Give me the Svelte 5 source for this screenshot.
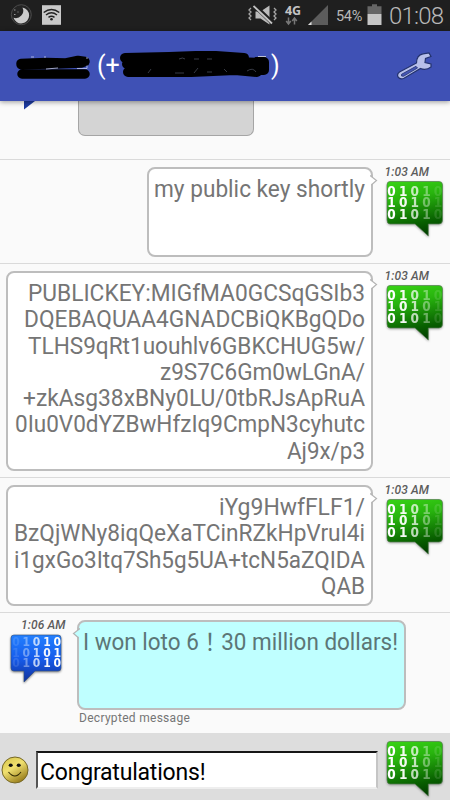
<script>
    const sent = [
        { time: '1:03 AM', height: 104, lines: [['my public key shortly', 211]] },
        {
            time: '1:03 AM',
            height: 214,
            lines: [
                ['PUBLICKEY:MIGfMA0GCSqGSIb3', 337],
                ['DQEBAQUAA4GNADCBiQKBgQDo', 341],
                ['TLHS9qRt1uouhlv6GBKCHUG5w/', 337],
                ['z9S7C6Gm0wLGnA/', 205],
                ['+zkAsg38xBNy0LU/0tbRJsApRuA', 342],
                ['0Iu0V0dYZBwHfzIq9CmpN3cyhutc', 350],
                ['Aj9x/p3', 78],
            ],
        },
        {
            time: '1:03 AM',
            height: 135,
            lines: [
                ['iYg9HwfFLF1/', 146],
                ['BzQjWNy8iqQeXaTCinRZkHpVruI4i', 351],
                ['i1gxGo3Itq7Sh5g5UA+tcN5aZQIDA', 351],
                ['QAB', 44],
            ],
        },
    ];

    const bits = ['01010', '10101', '01010'];
    const fade = [1, 0.95, 0.72, 0.38, 0.12];
    let draft = 'Congratulations!';
</script>

{#snippet line(text, width)}
    <svg class="line" {width} height="26.25" style="width: {width}px">
        <text x="0" y="21.3" textLength={width} lengthAdjust="spacingAndGlyphs">{text}</text>
    </svg>
{/snippet}

{#snippet greenBits()}
    <svg class="green" width="60" height="60" viewBox="0 0 60 60">
        <path d="M5 1.5H54Q57.500 1.500 57.500 5V40Q57.500 44 54 44H43.300V56L30 44H5Q2 44 2 40V5Q2 1.500 5 1.500Z" fill="url(#green)" stroke="#557d50" stroke-width=".7" />
        <text>
            {#each bits as row, r}
                {#each row as bit, c}
                    <tspan x={6.6 + c * 11.6} y={15.6 + r * 11.8} fill-opacity={fade[c]}>{bit}</tspan>
                {/each}
            {/each}
        </text>
    </svg>
{/snippet}

<!-- gradients shared by the icons -->
<svg class="defs" width="0" height="0">
    <defs>
        <linearGradient id="green" x1=".3" y1="0" x2=".5" y2="1">
            <stop offset="0" stop-color="#36cf14" />
            <stop offset=".3" stop-color="#28b40e" />
            <stop offset=".78" stop-color="#086000" />
            <stop offset="1" stop-color="#023f00" />
        </linearGradient>
        <linearGradient id="blue" x1="0" y1="0" x2="0" y2="1">
            <stop offset="0" stop-color="#2380ff" />
            <stop offset=".5" stop-color="#165ceb" />
            <stop offset="1" stop-color="#12329c" />
        </linearGradient>
        <linearGradient id="smile" x1=".2" y1="0" x2=".8" y2="1">
            <stop offset="0" stop-color="#d9c84e" />
            <stop offset=".4" stop-color="#f0e070" />
            <stop offset="1" stop-color="#8d7010" />
        </linearGradient>
    </defs>
</svg>

<div class="phone">
    <div class="status">
        <svg width="66" height="31" viewBox="0 0 66 31">
            <circle cx="21.300" cy="14.700" r="10" fill="#242424" stroke="#4c4c4c" />
            <path d="M22.500 7.500A8 8 0 1 1 13.500 17.800A7.500 7.500 0 0 0 22.500 7.500Z" fill="#ccc" />
            <path d="M14 10h1.500M14 14.500h1.500M17.500 12h1" stroke="#999" />
            <path d="M42 5.200H61V24.800H42Z" fill="#c9c9c9" />
            <path d="M43.700 12.500Q51.500 6.500 59.300 12.500M46 15Q51.500 10.700 57 15M48.500 17.400Q51.500 15.300 54.500 17.400" fill="none" stroke="#222" stroke-width="1.500" />
            <circle cx="51.500" cy="19.200" r="1.300" fill="#222" />
        </svg>
        <div class="status-right">
            <svg width="88" height="31" viewBox="0 0 88 31">
                <path d="M7.500 11.500h5l9-6v19l-9-6h-5Z" fill="#bbb" />
                <path d="M6 5L24.500 23" stroke="#1f1f1f" stroke-width="4.500" />
                <path d="M5.500 6L24 23.500" stroke="#c4c4c4" stroke-width="1.800" />
                <path d="M3 8l-2 2 2 2-2 2 2 2-2 2 2 2M26 8l2 2-2 2 2 2-2 2 2 2-2 2" fill="none" stroke="#a5a5a5" stroke-width="1.300" />
                <text class="net" x="37" y="14.5" textLength="16">4G</text>
                <path d="M40.500 17.500v6m-2.300-2.500l2.300 3 2.300-3M46.500 24.500v-6m-2.300 2.500l2.300-3 2.300 3" fill="none" stroke="#777" stroke-width="1.500" />
                <path d="M60 25L80 5V25Z" fill="#5c5c5c" />
                <path d="M60 25L63.500 21.500V25Z" fill="#ddd" />
            </svg>
            <span class="percent">54%</span>
            <svg width="15" height="31" viewBox="0 0 15 31">
                <path d="M5 4.200h5v2h4.500V14H.5V6.200H5Z" fill="#666" />
                <path d="M.5 14h14v11H.5Z" fill="#c6c6c6" />
            </svg>
            <span class="clock">01:08</span>
        </div>
    </div>

    <header>
        <svg width="76" height="30" viewBox="0 0 76 30">
            <path d="M5 12.500L30 11.500L50 12L62 9.500L69 10.500L65 12L40 13L5 13.500M6 23H69" fill="none" stroke="#000" stroke-width="9.500" stroke-linecap="round" stroke-linejoin="round" />
            <path d="M15 6h3M28 6h2M70 7h2M61 17.500h10v-3M30 18l12-1" fill="none" stroke="#c5cbf0" stroke-width=".8" />
        </svg>
        <span class="paren open">(+</span>
        <svg width="153" height="30" viewBox="0 0 153 30">
            <path d="M6 7L50 6L90 4.500L125 7L125 9M8 13H125L144 14M9 21H72L116 19L138 21M90 10L145 12V18M138 11h7v8h-7" fill="none" stroke="#000" stroke-width="10" stroke-linecap="round" stroke-linejoin="round" />
            <path d="M60 8q4-2 6 0M75 8h5M88 8h5M32 18l-3 4M56 22h9M79 17l-4 5M88 21h5M105 18l3 3M128 20q6-4 9 1" fill="none" stroke="#454956" stroke-width=".8" />
            <path d="M139 5.500h8" stroke="#ddd" stroke-width=".8" />
        </svg>
        <span class="paren">)</span>
        <svg class="wrench" width="38" height="30" viewBox="0 0 38 30">
            <path d="M3.500 21L20.500 12C20.500 6.500 23 3.500 27 2.800L33 2L35 5.500L29.500 7.500L29 11.500L35 13V16C31 19 27 18.500 24.500 17.500L8 27.300C2.500 29.500 -.5 24 3.500 21Z" fill="#b8c0ea" stroke="#24336f" stroke-width="1.200" />
            <path d="M5.500 23.300L20 15.300L21.500 17L7.500 25.300Q4.500 25.500 5.500 23.300Z" fill="#4555b5" stroke="#24336f" stroke-width=".8" />
        </svg>
    </header>

    <main>
        <div class="row first">
            <svg class="tail" width="12" height="9" viewBox="0 0 12 9"><path d="M0 0H11L0 8.500Z" fill="#1c3aa0" /></svg>
            <div class="old"></div>
        </div>

        {#each sent as message}
            <div class="row sent" style="height: {message.height}px">
                <div class="bubble" class:full={message.lines.length > 1}>
                    {#each message.lines as [text, width]}
                        {@render line(text, width)}
                    {/each}
                    <svg class="beak" width="8" height="13" viewBox="0 0 8 13"><path d="M0 1.500L6.500 6.500L1.300 11" /></svg>
                </div>
                <div class="side">
                    <time>{message.time}</time>
                    {@render greenBits()}
                </div>
            </div>
        {/each}

        <div class="row received">
            <div class="side">
                <time>1:06 AM</time>
                <svg class="blue" width="56" height="52" viewBox="0 0 56 52">
                    <path d="M6 2H50Q53 2 53 5V35Q53 38 50 38H27L16 49V38H6Q3 38 3 35V5Q3 2 6 2Z" fill="url(#blue)" stroke="#305080" stroke-width=".6" />
                    <text>
                        {#each bits as row, r}
                            {#each row as bit, c}
                                <tspan x={8 + c * 10.3} y={13 + r * 10.7} fill-opacity={fade[4 - c]}>{bit}</tspan>
                            {/each}
                        {/each}
                    </text>
                </svg>
            </div>
            <div class="content">
                <div class="bubble aqua">
                    {@render line('I won loto 6！30 million dollars!', 315)}
                    <svg class="beak" width="8" height="13" viewBox="0 0 8 13"><path d="M0 1.500L6.500 6.500L1.300 11" /></svg>
                </div>
                <p>Decrypted message</p>
            </div>
        </div>
    </main>

    <footer>
        <svg width="28" height="28" viewBox="0 0 28 28">
            <circle cx="14" cy="14" r="13" fill="url(#smile)" stroke="#766826" />
            <ellipse cx="9.700" cy="9.200" rx="2" ry="1.800" fill="#111" />
            <ellipse cx="17.700" cy="9.200" rx="2" ry="1.800" fill="#111" />
            <path d="M7.500 16Q14 24 20 16" fill="none" stroke="#302800" stroke-width="1.100" />
        </svg>
        <input bind:value={draft} />
        {@render greenBits()}
    </footer>
</div>

<style>
    :global(body) {
        margin: 0;
        background: #fafafa;
        overflow: hidden;
    }

    .phone {
        width: 450px;
        height: 800px;
        display: flex;
        flex-direction: column;
        overflow: hidden;
        font-family: Roboto, "Noto Sans CJK JP", sans-serif;
        background: #fafafa;
    }

    svg {
        display: block;
        flex: none;
    }

    .defs {
        position: absolute;
    }

    .status {
        height: 31px;
        flex: none;
        display: flex;
        justify-content: space-between;
        background: #1f1f1f;
        color: #b8b8b8;
    }

    .status-right {
        display: flex;
        align-items: center;
        padding-right: 6px;
    }

    .net {
        font: bold 12.5px "Open Sans", sans-serif;
        fill: #c4c4c4;
    }

    .percent {
        width: 31px;
        font-size: 14.5px;
        letter-spacing: -0.3px;
        margin-top: 1px;
    }

    .clock {
        width: 55px;
        margin-left: 7px;
        font-size: 24px;
        font-weight: 300;
        letter-spacing: -0.8px;
    }

    header {
        height: 70px;
        flex: none;
        display: flex;
        align-items: center;
        box-sizing: border-box;
        padding: 0 16px 1px 16px;
        background: #3f51b5;
        box-shadow: 0 1px 5px rgba(0, 0, 0, 0.4);
        z-index: 1;
        color: #fff;
        font-size: 25px;
    }

    .paren {
        width: 8px;
        margin-left: -1px;
    }

    .open {
        width: 22px;
        margin: 0 0 0 5px;
    }

    .wrench {
        margin-left: auto;
    }

    main {
        height: 632px;
        flex: none;
    }

    .row {
        display: flex;
        box-sizing: border-box;
        border-bottom: 1px solid #dadada;
    }

    .first {
        height: 59px;
        padding-left: 24px;
    }

    .old {
        width: 174px;
        height: 34px;
        margin-left: 41.5px;
        border: 1px solid #a5a5a5;
        border-top: none;
        border-radius: 0 0 7px 7px;
        background: #d4d4d4;
    }

    .sent {
        justify-content: flex-end;
        padding: 7px 0 6px 6px;
    }

    .bubble {
        position: relative;
        display: flex;
        flex-direction: column;
        align-items: flex-end;
        box-sizing: border-box;
        padding: 7px 6px 0 5px;
        border: 2px solid #bdbdbd;
        border-radius: 8px;
        background: #fff;
    }

    .bubble.full {
        width: 367px;
    }

    .line {
        overflow: visible;
        font-size: 23px;
        fill: #757575;
    }

    .beak {
        position: absolute;
        top: 5px;
        right: -7px;
        fill: #fff;
        stroke: #b4b4b4;
        stroke-width: 1.2;
    }

    .side {
        width: 77px;
        flex: none;
    }

    time {
        display: block;
        height: 14px;
        margin: -1px 0 0 11.5px;
        font-size: 12px;
        line-height: 13px;
        font-weight: 500;
        font-style: italic;
        color: #5c5c5c;
        letter-spacing: 0.1px;
        white-space: nowrap;
    }

    .green,
    .blue {
        font: bold 13.5px "DejaVu Sans Condensed", "DejaVu Sans", sans-serif;
        font-stretch: condensed;
        fill: #fff;
        text-anchor: middle;
    }

    .green {
        margin-left: 11.5px;
        filter: drop-shadow(0 1px 1px rgba(0, 0, 0, 0.3));
    }

    .blue {
        margin-left: 8px;
        font-size: 12px;
        filter: drop-shadow(0 1px 1px rgba(0, 0, 0, 0.5));
    }

    .received {
        height: 120px;
        padding-top: 7px;
        border: none;
    }

    .received time {
        margin-left: 21px;
    }

    .aqua {
        width: 329px;
        height: 90px;
        background: #bfffff;
    }

    .aqua .line {
        fill: #5c7676;
    }

    .aqua .beak {
        right: auto;
        left: -7px;
        transform: scaleX(-1);
        fill: #bfffff;
    }

    p {
        margin: 1px 0 0 2px;
        font-size: 12px;
        line-height: 14px;
        color: #757575;
        letter-spacing: 0.3px;
    }

    footer {
        height: 67px;
        flex: none;
        display: flex;
        align-items: flex-start;
        background: #ddd;
    }

    footer > svg:first-child {
        margin: 23px 0 0 1px;
    }

    input {
        width: 342px;
        height: 38px;
        box-sizing: border-box;
        margin: 18px 0 0 7px;
        padding: 4px 2px 0;
        border: 2px solid;
        border-color: #161616 #c5c5c5 #eee #555;
        border-radius: 0;
        outline: none;
        background: #fff;
        font: 23px Roboto, sans-serif;
        letter-spacing: -0.2px;
        color: #000;
    }

    footer .green {
        margin: 7px 0 0 6.5px;
    }
</style>
